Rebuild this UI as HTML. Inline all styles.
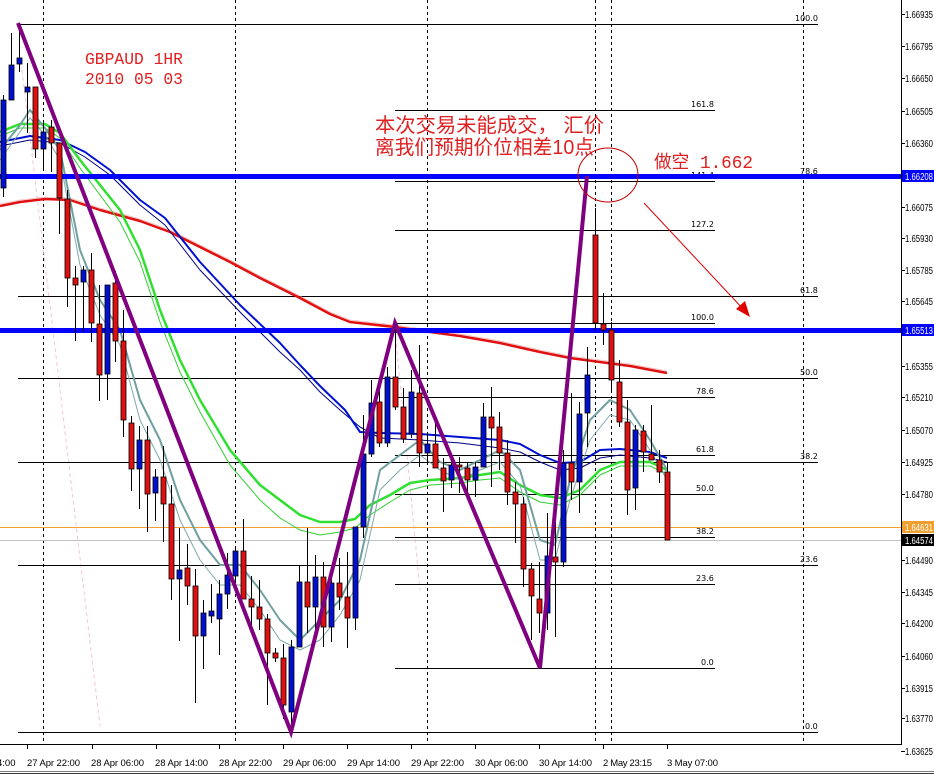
<!DOCTYPE html>
<html><head><meta charset="utf-8"><style>
html,body{margin:0;padding:0;background:#fff;width:934px;height:775px;overflow:hidden}
svg{display:block}
.f{font-family:"DejaVu Sans","Liberation Sans",sans-serif;font-size:8px;fill:#000}
.p{font-family:"Liberation Sans",sans-serif;font-size:10px;fill:#000}
.t{font-family:"Liberation Sans",sans-serif;font-size:9.5px;fill:#000}
</style></head><body>
<svg id="s" width="934" height="775" xmlns="http://www.w3.org/2000/svg">
<rect width="934" height="775" fill="#fff"/>
<g stroke="#000" stroke-width="1" stroke-dasharray="3,3">
<line x1="43.5" y1="0" x2="43.5" y2="743"/><line x1="235.5" y1="0" x2="235.5" y2="743"/>
<line x1="427.5" y1="0" x2="427.5" y2="743"/><line x1="595.5" y1="0" x2="595.5" y2="743"/>
<line x1="611.5" y1="0" x2="611.5" y2="743"/><line x1="803.5" y1="0" x2="803.5" y2="743"/>
</g>
<g stroke="#f3c8d0" stroke-width="1" stroke-dasharray="4,3" fill="none">
<line x1="22" y1="70" x2="100" y2="726"/><line x1="395" y1="330" x2="420" y2="590"/>
</g>
<g stroke="#000" stroke-width="1">
<line x1="18" y1="24.5" x2="818" y2="24.5"/><line x1="18" y1="296.5" x2="818" y2="296.5"/>
<line x1="18" y1="378.5" x2="818" y2="378.5"/><line x1="18" y1="462.5" x2="818" y2="462.5"/>
<line x1="18" y1="565.5" x2="818" y2="565.5"/><line x1="18" y1="732.5" x2="818" y2="732.5"/>
<line x1="395" y1="110.5" x2="715" y2="110.5"/><line x1="395" y1="181.5" x2="715" y2="181.5"/>
<line x1="395" y1="230.5" x2="715" y2="230.5"/><line x1="395" y1="323.5" x2="715" y2="323.5"/>
<line x1="395" y1="397.5" x2="715" y2="397.5"/><line x1="395" y1="455.5" x2="715" y2="455.5"/>
<line x1="395" y1="494.5" x2="715" y2="494.5"/><line x1="395" y1="537.5" x2="715" y2="537.5"/>
<line x1="395" y1="584.5" x2="715" y2="584.5"/><line x1="395" y1="668.5" x2="715" y2="668.5"/>
</g>
<line x1="0" y1="527.5" x2="901" y2="527.5" stroke="#f0a030"/>
<line x1="0" y1="540.5" x2="901" y2="540.5" stroke="#c0c0c0"/>
<g class="f">
<text x="795" y="21">100.0</text><text x="800" y="174">78.6</text><text x="800" y="293">61.8</text>
<text x="800" y="375">50.0</text><text x="800" y="459">38.2</text><text x="800" y="562">23.6</text><text x="805" y="729">0.0</text>
<text x="691" y="107">161.8</text><text x="691" y="178">141.4</text><text x="691" y="227">127.2</text>
<text x="691" y="320">100.0</text><text x="696" y="394">78.6</text><text x="696" y="452">61.8</text>
<text x="696" y="491">50.0</text><text x="696" y="534">38.2</text><text x="696" y="581">23.6</text><text x="701" y="665">0.0</text>
</g>
<g fill="none" stroke-linejoin="round">
<polyline stroke="#e01010" stroke-width="2.5" points="0,206 20,202 45,199 70,200 100,210 140,221 170,232 200,247 230,262 260,278 300,298 330,314 350,322 395,327 430,332 460,336 500,343 540,352 570,358 600,362 630,366 667,373"/>
<polyline stroke="#f0a0a0" stroke-width="0.6" points="0,204 20,200 45,197 70,198 100,208 140,219 170,230 200,245 230,260 260,276 300,296 330,312 350,320 395,325 430,330 460,334 500,341 540,350 570,356 600,360 630,364 667,371"/>
<polyline stroke="#000080" stroke-width="1" points="0,146 30,140 60,143 85,157 110,175 140,205 165,225 200,270 240,312 280,352 300,370 320,392 340,410 360,427 380,438 420,440 460,443 500,448 520,452 540,462 560,470 580,468 600,458 620,455 650,458 667,462"/>
<polyline stroke="#0010d0" stroke-width="2" points="0,142 30,136 60,140 85,152 110,170 140,200 165,218 200,262 240,305 280,343 300,365 320,386 345,410 360,432 380,433 420,434 460,437 500,440 520,444 540,455 560,463 580,462 600,450 620,449 650,452 667,458"/>
<polyline stroke="#30d030" stroke-width="1" points="0,136 20,128 45,128 60,138 80,168 100,195 120,222 140,262 160,322 180,372 200,412 230,465 260,500 280,518 300,530 320,535 340,532 355,528 370,515 390,502 410,490 430,485 460,483 480,480 500,478 520,492 540,502 560,505 580,495 600,475 620,466 650,466 667,474"/>
<polyline stroke="#30e030" stroke-width="2.5" points="0,132 20,124 45,124 60,133 80,160 100,185 120,210 140,250 160,310 180,360 200,400 230,450 260,485 280,500 300,515 320,522 340,522 355,519 370,505 390,495 410,483 430,480 460,478 480,475 500,472 520,485 540,495 560,498 580,490 600,470 620,462 650,462 667,470"/>
<polyline stroke="#80a8a8" stroke-width="1" points="0,160 20,132 30,118 45,135 60,160 80,265 100,315 120,345 140,420 160,460 180,520 200,560 220,585 240,585 260,610 280,640 300,650 320,640 340,615 360,580 380,490 400,470 420,455 440,470 460,480 480,470 500,462 520,485 540,560 555,560 570,500 590,440 610,415 630,420 650,450 667,480"/>
<polyline stroke="#70a0a0" stroke-width="2" points="0,150 20,125 30,110 45,128 60,150 80,250 100,300 120,330 140,400 160,440 180,500 200,540 220,565 240,565 260,590 280,620 300,640 320,620 340,600 360,560 380,470 400,455 420,440 440,462 460,470 480,460 500,450 520,470 540,540 555,545 570,480 590,420 610,400 630,410 650,440 667,470"/>
</g>
<rect x="0" y="174" width="901" height="5" fill="#0000ff"/>
<rect x="0" y="328" width="901" height="5" fill="#0000ff"/>
<g id="c"></g>
<polyline points="18,23 291,732 395,323 540,668 587,176" fill="none" stroke="#800080" stroke-width="4" stroke-linejoin="miter"/>
<ellipse cx="608" cy="175" rx="30" ry="27" fill="none" stroke="#c00000" stroke-width="1"/>
<line x1="644" y1="203" x2="744" y2="310" stroke="#e00000" stroke-width="1"/>
<polygon points="750,317 736,309 745,301" fill="#e00000"/>
<text x="85" y="64" font-family="'Liberation Mono',monospace" font-size="17" fill="#e02020" textLength="98" lengthAdjust="spacingAndGlyphs">GBPAUD 1HR</text>
<text x="85" y="84" font-family="'Liberation Mono',monospace" font-size="17" fill="#e02020" textLength="98" lengthAdjust="spacingAndGlyphs">2010 05 03</text>
<text x="375" y="132" font-family="'Liberation Sans','Noto Sans CJK SC',sans-serif" font-size="20" fill="#e02020" textLength="229" lengthAdjust="spacingAndGlyphs">本次交易未能成交， 汇价</text>
<text x="375" y="154" font-family="'Liberation Sans','Noto Sans CJK SC',sans-serif" font-size="20" fill="#e02020" textLength="219" lengthAdjust="spacingAndGlyphs">离我们预期价位相差10点</text>
<text x="654" y="168" font-family="'Liberation Mono','Noto Sans CJK SC',monospace" font-size="18" fill="#e02020" textLength="99" lengthAdjust="spacingAndGlyphs">做空 1.662</text>
<rect x="902" y="0" width="32" height="745" fill="#fff"/>
<line x1="901.5" y1="0" x2="901.5" y2="744" stroke="#000"/>
<line x1="0" y1="744.5" x2="902" y2="744.5" stroke="#000"/>
<g id="ax"></g>
<g class="t">
<line x1="27.5" y1="744" x2="27.5" y2="749" stroke="#000"/><line x1="92.5" y1="744" x2="92.5" y2="749" stroke="#000"/>
<line x1="156.5" y1="744" x2="156.5" y2="749" stroke="#000"/><line x1="219.5" y1="744" x2="219.5" y2="749" stroke="#000"/>
<line x1="283.5" y1="744" x2="283.5" y2="749" stroke="#000"/><line x1="347.5" y1="744" x2="347.5" y2="749" stroke="#000"/>
<line x1="411.5" y1="744" x2="411.5" y2="749" stroke="#000"/><line x1="475.5" y1="744" x2="475.5" y2="749" stroke="#000"/>
<line x1="539.5" y1="744" x2="539.5" y2="749" stroke="#000"/><line x1="603.5" y1="744" x2="603.5" y2="749" stroke="#000"/>
<line x1="667.5" y1="744" x2="667.5" y2="749" stroke="#000"/>
<text x="-3" y="766">4:00</text><text x="27" y="766" textLength="53">27 Apr 22:00</text><text x="91" y="766" textLength="53">28 Apr 06:00</text>
<text x="155" y="766" textLength="53">28 Apr 14:00</text><text x="219" y="766" textLength="53">28 Apr 22:00</text><text x="283" y="766" textLength="53">29 Apr 06:00</text>
<text x="347" y="766" textLength="53">29 Apr 14:00</text><text x="411" y="766" textLength="53">29 Apr 22:00</text><text x="475" y="766" textLength="53">30 Apr 06:00</text>
<text x="539" y="766" textLength="53">30 Apr 14:00</text><text x="603" y="766" textLength="49">2 May 23:15</text><text x="667" y="766" textLength="51">3 May 07:00</text>
</g>
<line x1="0" y1="771.5" x2="934" y2="771.5" stroke="#808080"/>
<line x1="0" y1="773.5" x2="934" y2="773.5" stroke="#404040"/>
</svg>
<script>
var d=[[0,100,188,95,197,'b'],[1,65,100,33,100,'b'],[2,58,64,23,72,'b'],[3,87,92,63,133,'b'],[4,87,149,87,158,'r'],[5,132,149,123,170,'b'],[6,127,143,120,172,'r'],[7,143,198,143,234,'r'],[8,199,278,190,307,'r'],[9,278,285,266,341,'r'],[10,270,282,266,332,'b'],[11,270,323,253,342,'r'],[12,324,375,285,401,'r'],[13,285,374,285,400,'b'],[14,283,341,271,362,'r'],[15,341,420,310,437,'r'],[16,423,469,416,491,'r'],[17,440,469,426,509,'b'],[18,440,494,426,532,'r'],[19,477,493,469,521,'b'],[20,477,504,446,542,'r'],[21,504,579,485,600,'r'],[22,570,579,528,641,'b'],[23,568,586,544,605,'r'],[24,586,636,569,703,'r'],[25,613,636,600,669,'b'],[26,611,616,584,623,'b'],[27,594,619,580,655,'b'],[28,575,594,553,609,'b'],[29,551,576,548,584,'b'],[30,551,599,519,599,'r'],[31,599,607,576,630,'r'],[32,607,619,580,630,'r'],[33,619,653,614,705,'r'],[34,653,658,648,662,'r'],[35,658,705,644,719,'r'],[36,647,712,640,730,'b'],[37,582,647,565,647,'b'],[38,582,607,528,633,'r'],[39,577,607,555,633,'b'],[40,577,627,562,647,'r'],[41,583,627,577,642,'b'],[42,583,597,558,610,'r'],[43,597,618,552,648,'r'],[44,527,618,527,630,'b'],[45,454,527,415,538,'b'],[46,403,454,380,457,'b'],[47,402,443,380,447,'r'],[48,377,443,367,447,'b'],[49,377,407,323,410,'r'],[50,407,439,388,443,'r'],[51,392,434,370,438,'b'],[52,393,453,345,467,'r'],[53,444,453,433,463,'b'],[54,444,468,422,468,'r'],[55,468,481,458,512,'r'],[56,465,480,457,488,'b'],[57,465,467,457,493,'r'],[58,468,480,462,495,'r'],[59,467,480,462,497,'b'],[60,417,467,403,467,'b'],[61,417,428,387,487,'r'],[62,427,453,412,470,'r'],[63,453,492,440,505,'r'],[64,492,504,482,543,'r'],[65,504,569,497,587,'r'],[66,569,596,563,640,'r'],[67,599,613,562,633,'r'],[68,556,613,513,630,'b'],[69,557,562,513,637,'r'],[70,463,562,450,567,'b'],[71,463,482,393,500,'r'],[72,414,482,402,513,'b'],[73,375,413,347,447,'b'],[74,235,323,208,330,'r'],[75,324,330,293,345,'r'],[76,330,380,322,393,'r'],[77,382,422,360,427,'r'],[78,422,490,400,515,'r'],[79,430,488,425,510,'b'],[80,431,452,425,472,'r'],[81,454,460,405,460,'r'],[82,460,472,450,483,'r'],[83,472,540,463,540,'r']];
var g=document.getElementById('c'),h='';
d.forEach(function(c){var x=3+8*c[0];h+='<line x1="'+(x+.5)+'" y1="'+c[3]+'" x2="'+(x+.5)+'" y2="'+c[4]+'" stroke="#000"/>';
h+='<rect x="'+(x-2)+'" y="'+c[1]+'" width="5" height="'+Math.max(2,c[2]-c[1])+'" fill="'+(c[5]=='r'?'#e01010':'#0010d0')+'" stroke="#000" stroke-width="0.8"/>';});
g.innerHTML=h;
var L=[[14,'1.66935'],[46,'1.66795'],[78,'1.66650'],[111,'1.66505'],[143,'1.66360'],[207,'1.66075'],[238,'1.65930'],[270,'1.65785'],[301,'1.65645'],[366,'1.65355'],[397,'1.65210'],[430,'1.65070'],[462,'1.64925'],[494,'1.64780'],[560,'1.64490'],[592,'1.64345'],[623,'1.64200'],[656,'1.64060'],[688,'1.63915'],[718,'1.63770'],[751,'1.63625']];
var a='';L.forEach(function(l){a+='<line x1="901" y1="'+(l[0]+.5)+'" x2="905" y2="'+(l[0]+.5)+'" stroke="#000"/><text class="p" x="905" y="'+(l[0]+4)+'" textLength="28" lengthAdjust="spacingAndGlyphs">'+l[1]+'</text>';});
[[176,'1.66208','#0000ff','#fff'],[330,'1.65513','#0000ff','#fff'],[527,'1.64631','#f0a030','#fff'],[540,'1.64574','#000','#fff']].forEach(function(l){a+='<rect x="902" y="'+(l[0]-6)+'" width="32" height="12" fill="'+l[2]+'"/><text class="p" x="905" y="'+(l[0]+4)+'" textLength="28" lengthAdjust="spacingAndGlyphs" style="fill:'+l[3]+'">'+l[1]+'</text>';});
document.getElementById('ax').innerHTML=a;
</script>
</body></html>
